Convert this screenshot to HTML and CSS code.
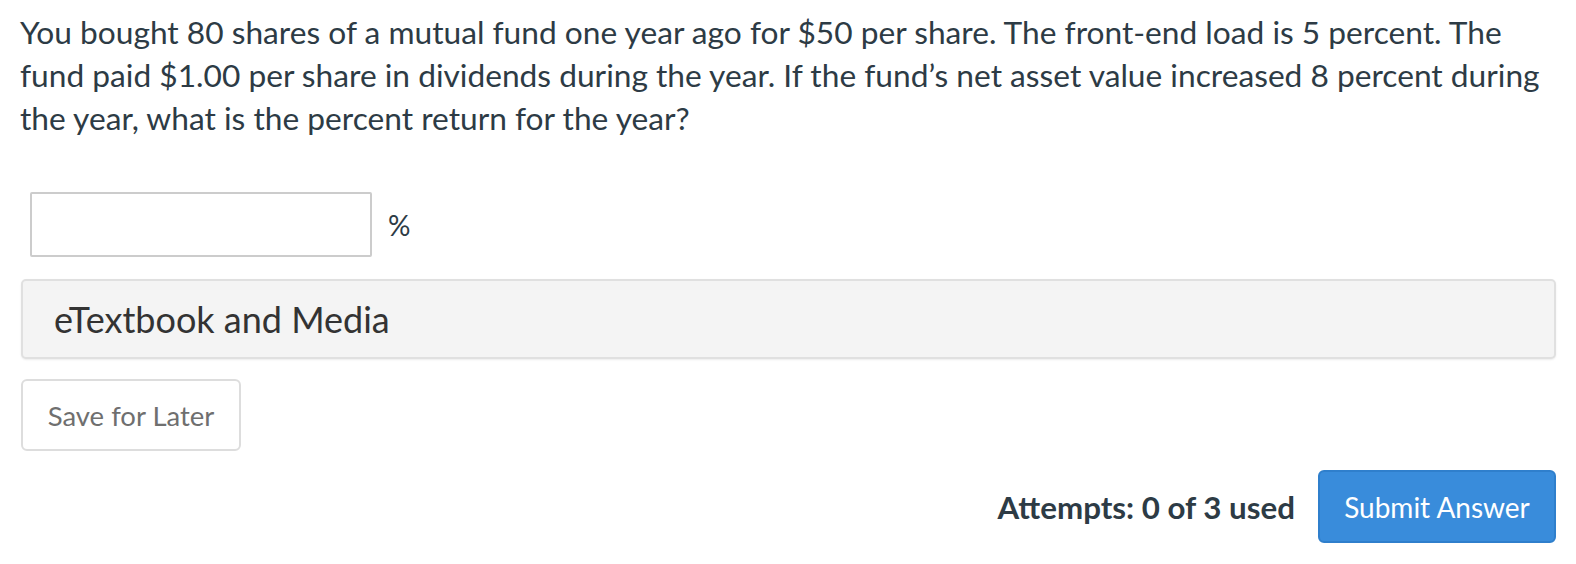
FILE: index.html
```html
<!DOCTYPE html>
<html>
<head>
<meta charset="utf-8">
<link rel="stylesheet" href="styles.css">
</head>
<body>
<div class="page">
  <p class="question">You bought 80 shares of a mutual fund one year ago for $50 per share. The front-end load is 5 percent. The fund paid $1.00 per share in dividends during the year. If the fund’s net asset value increased 8 percent during the year, what is the percent return for the year?</p>
  <div class="answer-row">
    <input class="answer-input" type="text">
    <span class="unit">%</span>
  </div>
  <div class="media-panel">eTextbook and Media</div>
  <button class="btn-save">Save for Later</button>
  <div class="submit-row">
    <span class="attempts">Attempts: 0 of 3 used</span>
    <button class="btn-submit">Submit Answer</button>
  </div>
</div>
</body>
</html>
```
FILE: styles.css
```css
html, body {
  margin: 0;
  padding: 0;
  background: #fff;
}
.page {
  font-family: Lato, "Open Sans", sans-serif;
  color: #2d3b45;
  padding: 11px 0 0 20px;
  width: 1556px;
}
.question {
  margin: 0;
  font-size: 31.7px;
  line-height: 43px;
  width: 1525px;
}
.answer-row {
  display: flex;
  align-items: center;
  margin-top: 52px;
  padding-left: 10px;
  gap: 16px;
}
.answer-input {
  width: 342px;
  height: 65px;
  box-sizing: border-box;
  border: 2px solid #cccccc;
  border-radius: 2px;
  margin: 0;
  background: #fff;
}
.unit {
  font-size: 28px;
  color: #2d3b45;
}
.media-panel {
  margin-top: 22px;
  margin-left: 1px;
  width: 1535px;
  box-sizing: border-box;
  height: 80px;
  background: #f4f4f4;
  border: 2px solid #e0e0e0;
  border-radius: 5px;
  box-shadow: 0 1px 2px rgba(0,0,0,0.08);
  padding-left: 31px;
  display: flex;
  align-items: center;
  font-size: 36px;
  color: #333333;
}
.btn-save {
  display: block;
  margin: 20px 0 0 1px;
  width: 220px;
  height: 72px;
  background: #fff;
  border: 2px solid #dddddd;
  border-radius: 6px;
  font-family: Lato, sans-serif;
  font-size: 27.5px;
  color: #6f6f6f;
  padding: 0;
}
.submit-row {
  display: flex;
  justify-content: flex-end;
  align-items: center;
  gap: 23px;
  margin-top: 19px;
  width: 1536px;
}
.attempts {
  font-size: 31.3px;
  font-weight: bold;
  color: #2d3b45;
}
.btn-submit {
  width: 238px;
  height: 73px;
  background: #398cdb;
  border: 2px solid #2f7fcc;
  border-radius: 6px;
  color: #fff;
  font-family: Lato, sans-serif;
  font-size: 28px;
  padding: 0;
}
```
